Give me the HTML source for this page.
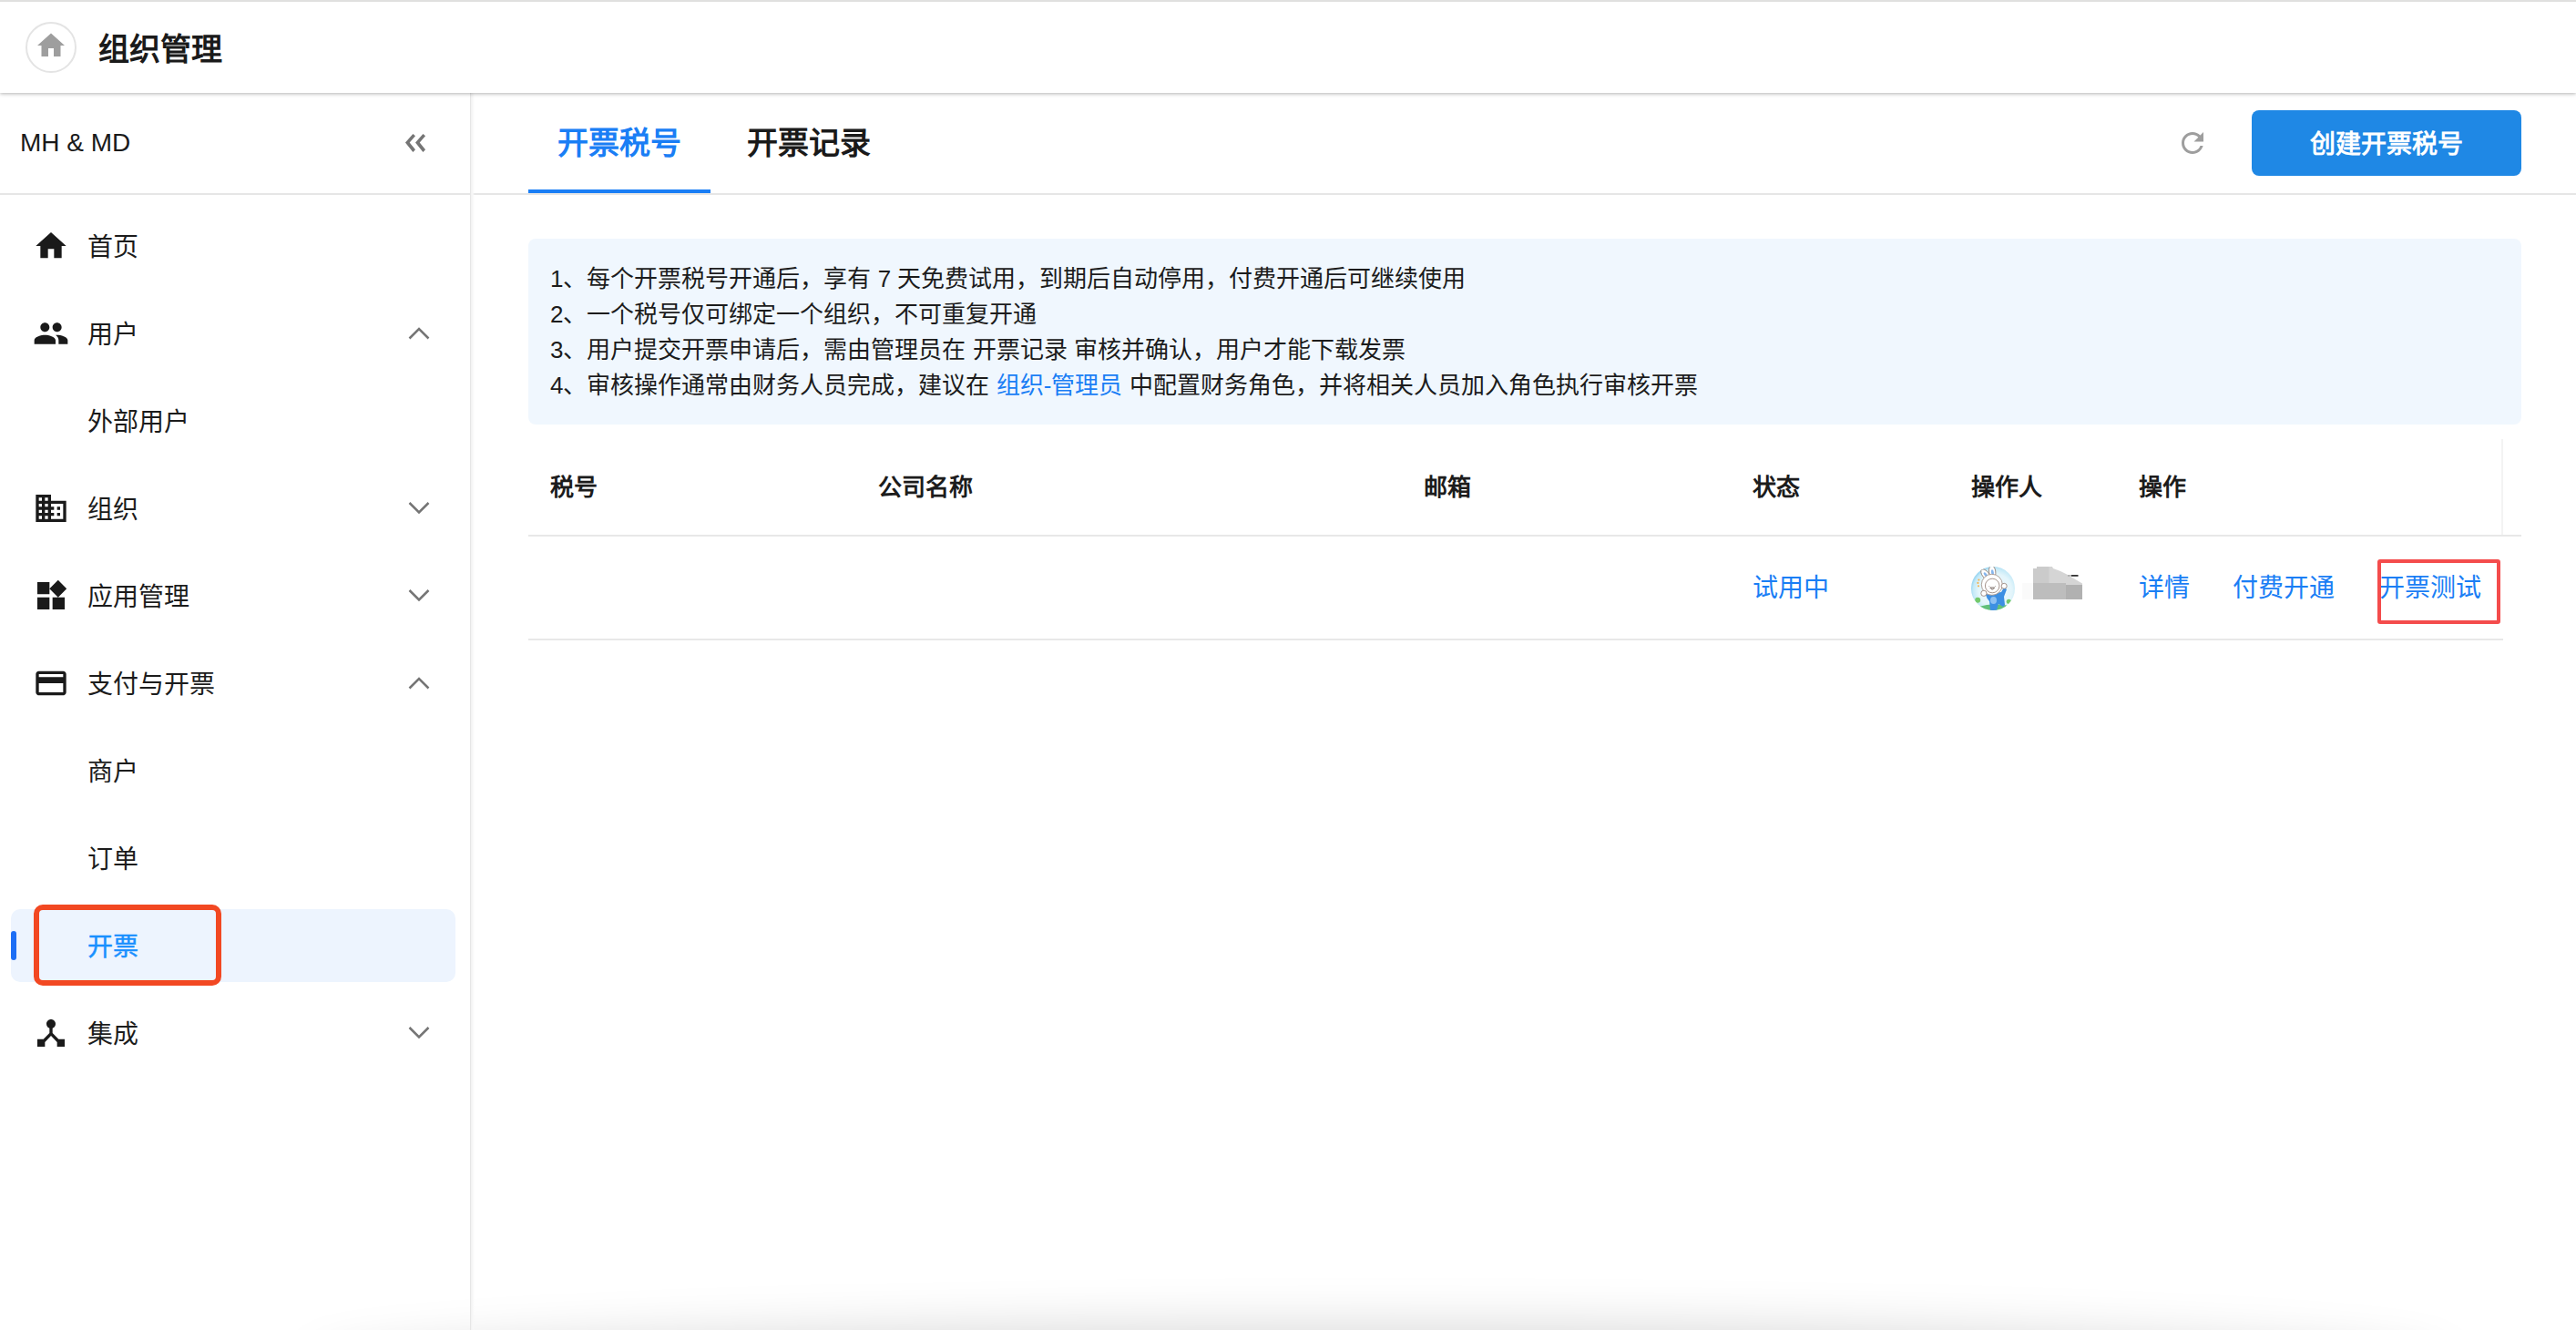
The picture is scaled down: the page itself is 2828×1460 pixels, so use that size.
<!DOCTYPE html>
<html lang="zh-CN">
<head>
<meta charset="utf-8">
<style>
*{box-sizing:border-box;margin:0;padding:0}
html,body{width:2828px;height:1460px;overflow:hidden;background:#fff}
body{position:relative;font-family:"Liberation Sans",sans-serif;color:#1c1c1c}
.abs{position:absolute}
.t{position:absolute;white-space:nowrap;line-height:40px;height:40px}
svg{display:block}
</style>
</head>
<body>
<!-- top line -->
<div class="abs" style="left:0;top:0;width:2828px;height:2px;background:#e0e0df;z-index:6"></div>
<!-- header -->
<div class="abs" style="left:0;top:2px;width:2828px;height:100px;background:#fff;z-index:3;box-shadow:0 1px 4px rgba(0,0,0,0.3)"></div>
<div class="abs" style="left:28px;top:24px;width:56px;height:56px;border:2px solid #e4e4e4;border-radius:50%;z-index:4"></div>
<svg class="abs" style="left:38px;top:32px;z-index:4" width="36" height="36" viewBox="0 0 24 24"><path fill="#9e9e9e" d="M10 20v-6h4v6h5v-8h3L12 3 2 12h3v8z"/></svg>
<div class="t" style="left:108px;top:34px;font-size:34px;font-weight:bold;color:#1a1a1a;z-index:4">组织管理</div>

<!-- sidebar -->
<div class="abs" style="left:516px;top:102px;width:1px;height:1358px;background:#e6e6e6;z-index:2"></div><div class="abs" style="left:517px;top:102px;width:4px;height:1358px;background:linear-gradient(90deg,#f1f1f1,#f8f8f8 50%,rgba(255,255,255,0));z-index:2"></div>
<div class="t" style="left:22px;top:137px;font-size:28px;color:#1a1a1a">MH &amp; MD</div>
<svg class="abs" style="left:436px;top:140px" width="40" height="35" viewBox="0 0 40 35"><polygon points="8.95,16.58 17.37,6.97 20.00,9.34 13.68,16.58 20.00,24.34 17.37,26.97" fill="#757575"/><polygon points="20.00,16.58 28.42,6.97 31.05,9.34 24.73,16.58 31.05,24.34 28.42,26.97" fill="#757575"/></svg>
<div class="abs" style="left:0;top:212px;width:516px;height:2px;background:#e6e6e6"></div>

<div id="menu">
<svg class="abs" style="left:36px;top:250px" width="40" height="40" viewBox="0 0 24 24"><path fill="#1a1a1a" d="M10 20v-6h4v6h5v-8h3L12 3 2 12h3v8z"/></svg>
<div class="t" style="left:96px;top:252px;font-size:28px">首页</div>

<svg class="abs" style="left:36px;top:346px" width="40" height="40" viewBox="0 0 24 24"><path fill="#1a1a1a" d="M16 11c1.66 0 2.99-1.34 2.99-3S17.66 5 16 5c-1.66 0-3 1.34-3 3s1.34 3 3 3zm-8 0c1.66 0 2.99-1.34 2.99-3S9.66 5 8 5C6.34 5 5 6.34 5 8s1.34 3 3 3zm0 2c-2.33 0-7 1.17-7 3.5V19h14v-2.5c0-2.33-4.67-3.5-7-3.5zm8 0c-.29 0-.62.02-.97.05 1.16.84 1.97 1.97 1.97 3.45V19h6v-2.5c0-2.33-4.67-3.5-7-3.5z"/></svg>
<div class="t" style="left:96px;top:348px;font-size:28px">用户</div>
<svg class="abs" style="left:446px;top:356px" width="28" height="20" viewBox="0 0 28 20"><polyline points="3.5,15.5 14,5 24.5,15.5" fill="none" stroke="#757575" stroke-width="2.5"/></svg>

<div class="t" style="left:96px;top:444px;font-size:28px">外部用户</div>

<svg class="abs" style="left:36px;top:538px" width="40" height="40" viewBox="0 0 24 24"><path fill="#1a1a1a" d="M12 7V3H2v18h20V7H12zM6 19H4v-2h2v2zm0-4H4v-2h2v2zm0-4H4V9h2v2zm0-4H4V5h2v2zm4 12H8v-2h2v2zm0-4H8v-2h2v2zm0-4H8V9h2v2zm0-4H8V5h2v2zm10 12h-8v-2h2v-2h-2v-2h2v-2h-2V9h8v10zm-2-8h-2v2h2v-2zm0 4h-2v2h2v-2z"/></svg>
<div class="t" style="left:96px;top:540px;font-size:28px">组织</div>
<svg class="abs" style="left:446px;top:548px" width="28" height="20" viewBox="0 0 28 20"><polyline points="3.5,4 14,14.5 24.5,4" fill="none" stroke="#757575" stroke-width="2.5"/></svg>

<svg class="abs" style="left:36px;top:634px" width="40" height="40" viewBox="0 0 24 24"><path fill="#1a1a1a" d="M13 13v8h8v-8h-8zM3 21h8v-8H3v8zM3 3v8h8V3H3zm13.66-1.31L11 7.34 16.66 13l5.66-5.66-5.66-5.65z"/></svg>
<div class="t" style="left:96px;top:636px;font-size:28px">应用管理</div>
<svg class="abs" style="left:446px;top:644px" width="28" height="20" viewBox="0 0 28 20"><polyline points="3.5,4 14,14.5 24.5,4" fill="none" stroke="#757575" stroke-width="2.5"/></svg>

<svg class="abs" style="left:36px;top:730px" width="40" height="40" viewBox="0 0 24 24"><path fill="#1a1a1a" d="M20 4H4c-1.11 0-1.99.89-1.99 2L2 18c0 1.11.89 2 2 2h16c1.11 0 2-.89 2-2V6c0-1.11-.89-2-2-2zm0 14H4v-6h16v6zm0-10H4V6h16v2z"/></svg>
<div class="t" style="left:96px;top:732px;font-size:28px">支付与开票</div>
<svg class="abs" style="left:446px;top:740px" width="28" height="20" viewBox="0 0 28 20"><polyline points="3.5,15.5 14,5 24.5,15.5" fill="none" stroke="#757575" stroke-width="2.5"/></svg>

<div class="t" style="left:96px;top:828px;font-size:28px">商户</div>
<div class="t" style="left:96px;top:924px;font-size:28px">订单</div>

<div class="abs" style="left:12px;top:998px;width:488px;height:80px;background:#edf4fe;border-radius:10px"></div>
<div class="abs" style="left:12px;top:1022px;width:6px;height:32px;background:#1e6ff5;border-radius:3px"></div>
<div class="t" style="left:96px;top:1020px;font-size:28px;color:#1890ff;-webkit-text-stroke:0.5px #1890ff">开票</div>
<div class="abs" style="left:37px;top:993px;width:206px;height:89px;border:6px solid #f24822;border-radius:10px"></div>

<svg class="abs" style="left:36px;top:1114px" width="40" height="40" viewBox="0 0 24 24"><path fill="#1a1a1a" d="M17 16l-4-4V8.82C14.16 8.4 15 7.3 15 6c0-1.66-1.34-3-3-3S9 4.34 9 6c0 1.3.84 2.4 2 2.82V12l-4 4H3v5h5v-3.05l4-4.2 4 4.2V21h5v-5h-4z"/></svg>
<div class="t" style="left:96px;top:1116px;font-size:28px">集成</div>
<svg class="abs" style="left:446px;top:1124px" width="28" height="20" viewBox="0 0 28 20"><polyline points="3.5,4 14,14.5 24.5,4" fill="none" stroke="#757575" stroke-width="2.5"/></svg>
</div>

<!-- content: tabs -->
<div class="abs" style="left:517px;top:212px;width:2311px;height:2px;background:#e6e6e6"></div>
<div class="t" style="left:612px;top:137px;font-size:34px;font-weight:bold;color:#1a7ef5">开票税号</div>
<div class="abs" style="left:580px;top:208px;width:200px;height:4px;background:#1a7ef5"></div>
<div class="t" style="left:820px;top:137px;font-size:34px;font-weight:bold;color:#1a1a1a">开票记录</div>

<svg class="abs" style="left:2389px;top:139px" width="36" height="36" viewBox="0 0 24 24"><path fill="#9e9e9e" d="M17.65 6.35C16.2 4.9 14.21 4 12 4c-4.42 0-7.99 3.58-7.99 8s3.57 8 7.99 8c3.73 0 6.84-2.55 7.73-6h-2.08c-.82 2.33-3.04 4-5.65 4-3.31 0-6-2.69-6-6s2.69-6 6-6c1.66 0 3.14.69 4.22 1.78L13 11h7V4l-2.35 2.35z"/></svg>
<div class="abs" style="left:2472px;top:121px;width:296px;height:72px;background:#1f88e5;border-radius:8px"></div>
<div class="t" style="left:2536px;top:139px;font-size:28px;font-weight:bold;color:#fff">创建开票税号</div>

<!-- info box -->
<div class="abs" style="left:580px;top:262px;width:2188px;height:204px;background:#f0f7fe;border-radius:8px"></div>
<div class="abs" style="left:604px;top:287px;font-size:26px;line-height:39px;white-space:nowrap;color:#1c1c1c">
1、每个开票税号开通后，享有 7 天免费试用，到期后自动停用，付费开通后可继续使用<br>
2、一个税号仅可绑定一个组织，不可重复开通<br>
3、用户提交开票申请后，需由管理员在 开票记录 审核并确认，用户才能下载发票<br>
4、审核操作通常由财务人员完成，建议在 <span style="color:#1a7ef5">组织-管理员</span> 中配置财务角色，并将相关人员加入角色执行审核开票
</div>

<!-- table -->
<div class="abs" style="left:2746px;top:482px;width:2px;height:106px;background:#f3f3f3"></div>
<div class="abs" style="left:580px;top:587px;width:2188px;height:2px;background:#e8e8e8"></div>
<div class="abs" style="left:580px;top:701px;width:2168px;height:2px;background:#e8e8e8"></div>
<div class="t" style="left:604px;top:515px;font-size:26px;font-weight:bold">税号</div>
<div class="t" style="left:964px;top:515px;font-size:26px;font-weight:bold">公司名称</div>
<div class="t" style="left:1563px;top:515px;font-size:26px;font-weight:bold">邮箱</div>
<div class="t" style="left:1924px;top:515px;font-size:26px;font-weight:bold">状态</div>
<div class="t" style="left:2164px;top:515px;font-size:26px;font-weight:bold">操作人</div>
<div class="t" style="left:2348px;top:515px;font-size:26px;font-weight:bold">操作</div>

<div class="t" style="left:1924px;top:626px;font-size:28px;color:#1a7ef5">试用中</div>
<svg class="abs" style="left:2164px;top:622px" width="48" height="48" viewBox="0 0 48 48">
<defs><clipPath id="cc"><circle cx="24" cy="24" r="24"/></clipPath>
<radialGradient id="sky" cx="55%" cy="55%" r="55%"><stop offset="0" stop-color="#f3fbfe"/><stop offset=".7" stop-color="#e3f5fb"/><stop offset=".92" stop-color="#c4e9f7"/><stop offset="1" stop-color="#9fd8f2"/></radialGradient></defs>
<g clip-path="url(#cc)">
<rect width="48" height="48" fill="url(#sky)"/>
<path d="M8 44 Q24 39 42 43 L42 48 L8 48Z" fill="#62c07a"/>
<circle cx="7.2" cy="36.8" r="3" fill="#74c96a"/><circle cx="41.3" cy="38.3" r="2.6" fill="#74c96a"/>
<circle cx="8.4" cy="14.6" r="1.1" fill="#f2b455"/><circle cx="7.4" cy="17.9" r="1.1" fill="#f2b455"/><circle cx="8" cy="21.3" r="1.1" fill="#f2b455"/>
<path d="M16 31 Q20 28 26 29 L33 28 L36 23 L39 25 L36 33 L37 42 L35 44 L30 41 L28 48 L21 48 L20 38 Q17 35 16 31Z" fill="#3d8fe3"/>
<ellipse cx="24.5" cy="37" rx="3.5" ry="4" fill="#8ec0f2"/>
<g transform="rotate(-38 15.8 8.7)"><ellipse cx="15.8" cy="8.7" rx="3.6" ry="6.8" fill="#fff" stroke="#8e7a70" stroke-width=".8"/><ellipse cx="15.8" cy="9.2" rx="1.4" ry="3.4" fill="#86b6ee"/></g>
<g transform="rotate(-8 23.2 5.5)"><ellipse cx="23.2" cy="5.5" rx="3.6" ry="6.8" fill="#fff" stroke="#8e7a70" stroke-width=".8"/><ellipse cx="23.3" cy="6.5" rx="1.4" ry="3.3" fill="#86b6ee"/></g>
<circle cx="22.8" cy="19.8" r="11.5" fill="#fff" stroke="#9a8a82" stroke-width=".8"/>
<circle cx="23.2" cy="21" r="7.8" fill="#fff" stroke="#8e7a70" stroke-width=".8"/>
<path d="M20.8 23 Q23.2 27 25.6 23Z" fill="#fff" stroke="#5a4a42" stroke-width=".8"/>
<path d="M19.6 21.3 l.6 .6 M26.6 21.3 l-.6 .6" stroke="#5a4a42" stroke-width=".8"/>
<circle cx="36.2" cy="21.3" r="3" fill="#fff" stroke="#8e7a70" stroke-width=".8"/>
<circle cx="13.9" cy="29.3" r="3.1" fill="#fff" stroke="#8e7a70" stroke-width=".8"/>
</g></svg>
<svg class="abs" style="left:2218px;top:620px" width="72" height="40" viewBox="2218 620 72 40">
<rect x="2220" y="640" width="12" height="18" fill="#fafafa"/>
<path d="M2232 624 L2236 624 L2236 622 L2253 622 L2254 624 L2262 627 L2270 631 L2280 637 L2286 640.5 L2286 642 L2232 642Z" fill="#d5d5d5"/>
<path d="M2232 624 L2236 624 L2236 622 L2249.5 622 L2249.5 642 L2232 642Z" fill="#cbcbcb"/>
<rect x="2232" y="640" width="36" height="18" fill="#bdbdbd"/>
<rect x="2268" y="642" width="18" height="16" fill="#b1b1b1"/>
<rect x="2270" y="631.3" width="4" height="1.2" fill="#999"/><rect x="2274" y="631" width="7.5" height="1.8" fill="#333"/>
</svg>
<div class="t" style="left:2348px;top:626px;font-size:28px;color:#1a7ef5">详情</div>
<div class="t" style="left:2451px;top:626px;font-size:28px;color:#1a7ef5">付费开通</div>
<div class="t" style="left:2612px;top:626px;font-size:28px;color:#1a7ef5">开票测试</div>
<div class="abs" style="left:2610px;top:614px;width:135px;height:71px;border:4px solid #f44c4c;border-radius:3px"></div>

<!-- bottom shadow -->
<div class="abs" style="left:370px;top:1485px;width:2290px;height:40px;border-radius:50%;box-shadow:0 0 55px 30px rgba(0,0,0,0.15)"></div>
</body>
</html>
